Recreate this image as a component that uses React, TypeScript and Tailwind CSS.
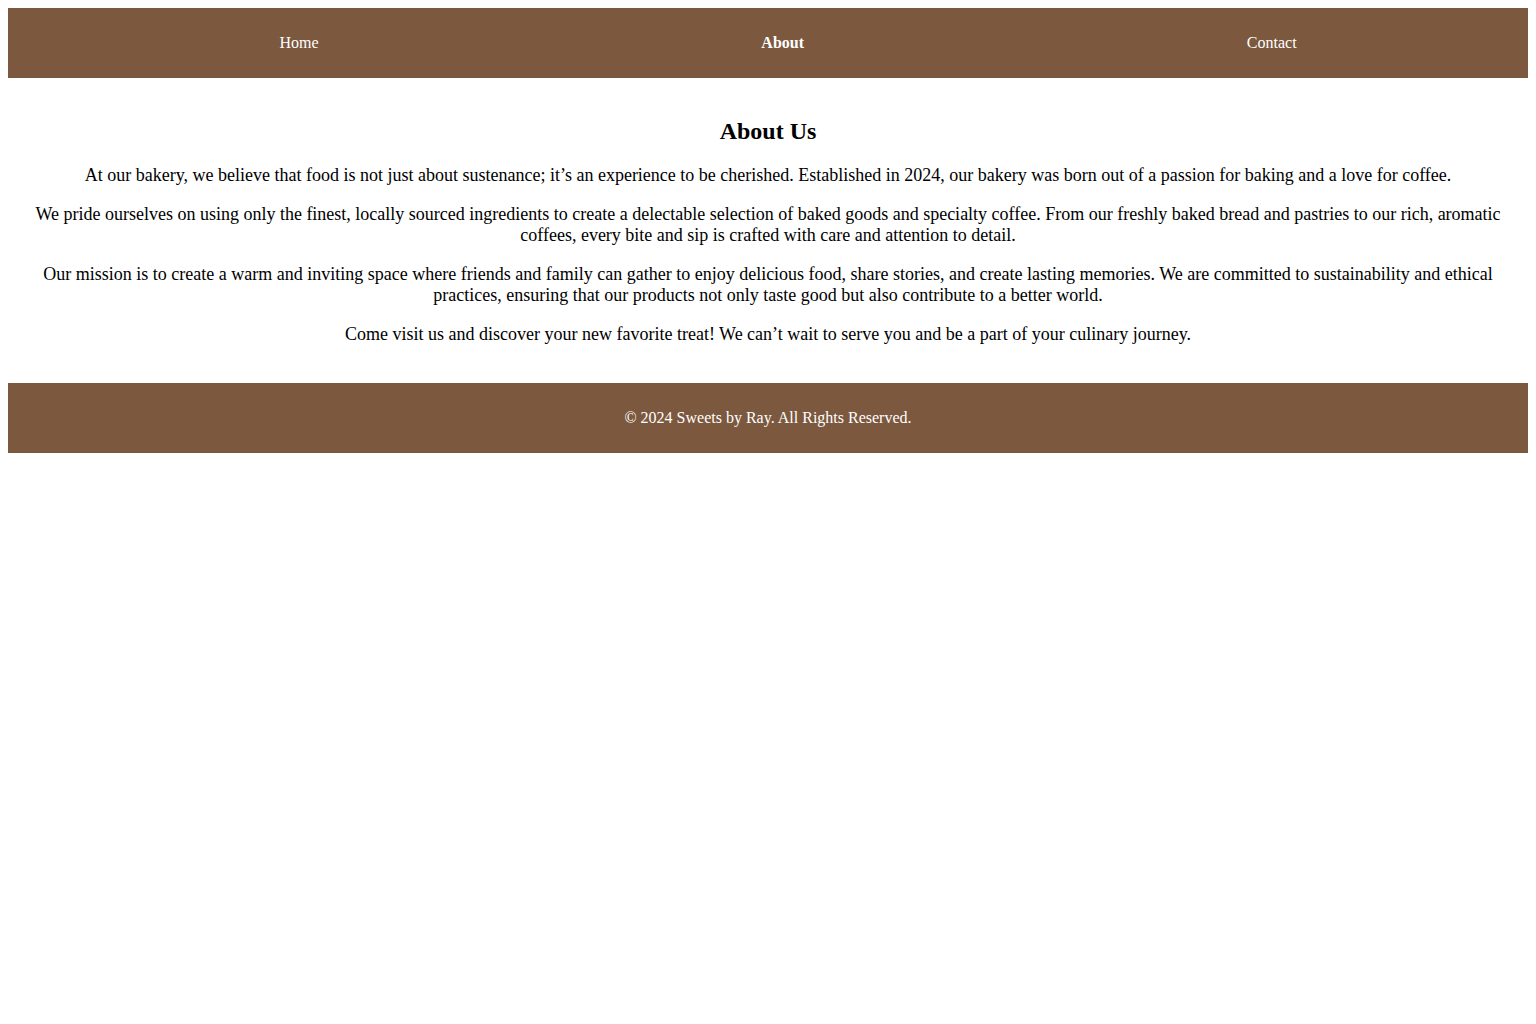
const NAV_ITEMS = [
  { label: "Home", active: false },
  { label: "About", active: true },
  { label: "Contact", active: false },
];

const PARAGRAPHS = [
  "At our bakery, we believe that food is not just about sustenance; it’s an experience to be cherished. Established in 2024, our bakery was born out of a passion for baking and a love for coffee.",
  "We pride ourselves on using only the finest, locally sourced ingredients to create a delectable selection of baked goods and specialty coffee. From our freshly baked bread and pastries to our rich, aromatic coffees, every bite and sip is crafted with care and attention to detail.",
  "Our mission is to create a warm and inviting space where friends and family can gather to enjoy delicious food, share stories, and create lasting memories. We are committed to sustainability and ethical practices, ensuring that our products not only taste good but also contribute to a better world.",
  "Come visit us and discover your new favorite treat! We can’t wait to serve you and be a part of your culinary journey.",
];

export default function App() {
  return (
    <div className="min-h-screen bg-white p-2 font-['Liberation_Serif',serif] text-black">
      {/* Top navigation */}
      <nav className="bg-[#7b583e] p-[10px]">
        <ul className="my-4 flex justify-around pl-10 text-base leading-[18px] text-white">
          {NAV_ITEMS.map((item) => (
            <li key={item.label}>
              <a href="#" className={item.active ? "font-bold" : ""}>
                {item.label}
              </a>
            </li>
          ))}
        </ul>
      </nav>

      {/* About section */}
      <section className="p-5 text-center">
        <h2 className="mt-[19px] mb-[20px] text-2xl leading-[28px] font-bold">About Us</h2>
        {PARAGRAPHS.map((text, i) => (
          <p key={i} className="my-[18px] text-[18px] leading-[21px]">
            {text}
          </p>
        ))}
      </section>

      {/* Footer */}
      <footer className="bg-[#7b583e] p-[10px] text-center text-white">
        <p className="my-4 text-base leading-[18px]">© 2024 Sweets by Ray. All Rights Reserved.</p>
      </footer>
    </div>
  );
}
